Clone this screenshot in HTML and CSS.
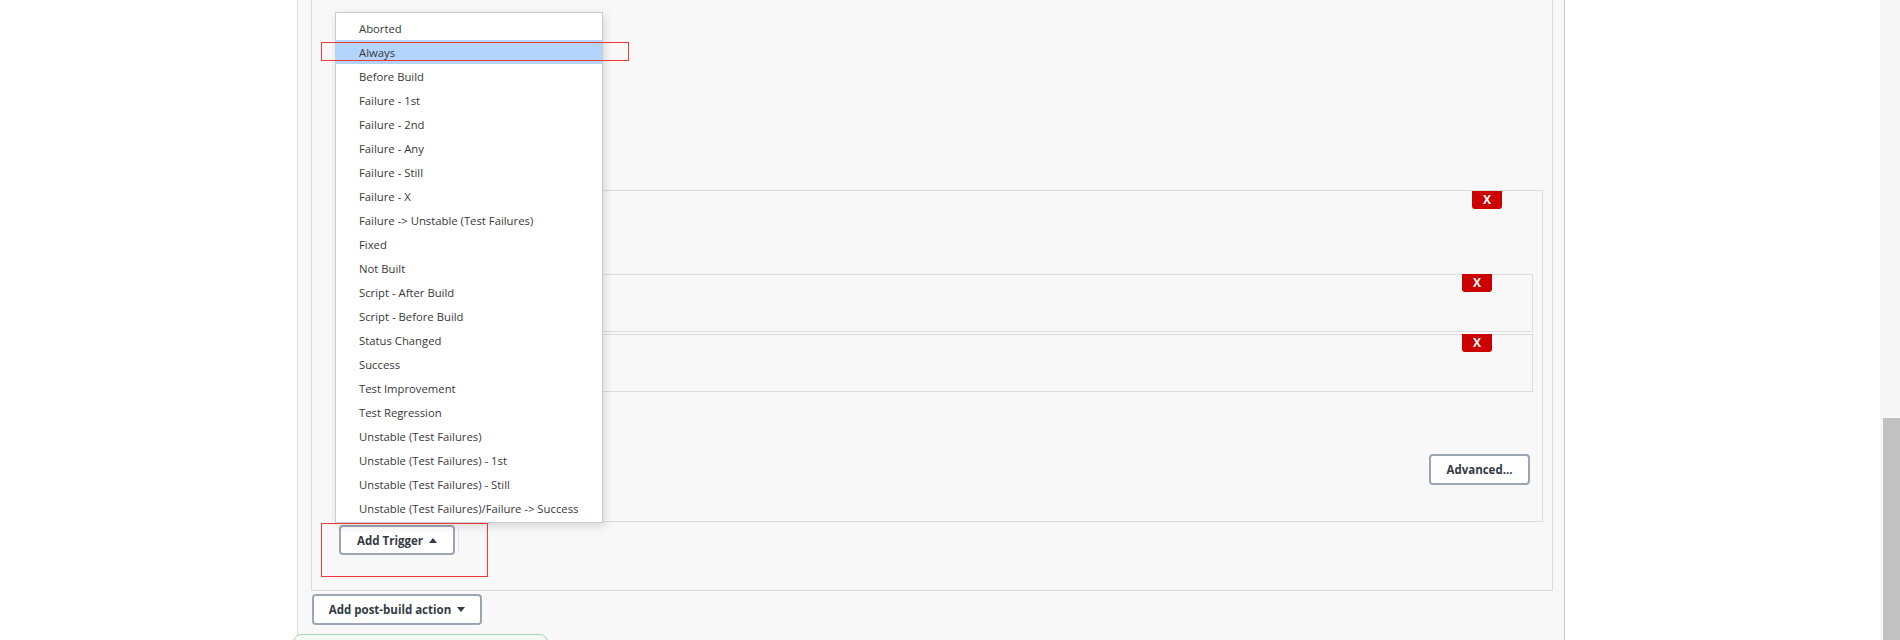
FILE: index.html
```html
<!DOCTYPE html>
<html>
<head>
<meta charset="utf-8">
<link rel="stylesheet" href="styles.css">
</head>
<body>
<div class="page">
  <div class="gutter"></div>
  <div class="column">
    <div class="section">
      <div class="trigger-box">
        <button class="del del-top">X</button>
        <div class="sub-box"><button class="del del-sub">X</button></div>
        <div class="sub-box sub-box-2"><button class="del del-sub">X</button></div>
        <div class="adv-row"><button class="btn btn-adv">Advanced...</button></div>
      </div>
      <div class="trigger-row">
        <button class="btn btn-trigger">Add Trigger <svg class="caret" width="8" height="5" viewBox="0 0 8 5"><polygon points="0,5 8,5 4,0" fill="#333a45"/></svg></button>
        <span class="split"></span>
      </div>
    </div>
    <button class="btn btn-post">Add post-build action <svg class="caret" width="8" height="5" viewBox="0 0 8 5"><polygon points="0,0 8,0 4,5" fill="#333a45"/></svg></button>
    <div class="notice"></div>
  </div>

  <ul class="menu">
    <li>Aborted</li>
    <li class="active">Always</li>
    <li>Before Build</li>
    <li>Failure - 1st</li>
    <li>Failure - 2nd</li>
    <li>Failure - Any</li>
    <li>Failure - Still</li>
    <li>Failure - X</li>
    <li>Failure -&gt; Unstable (Test Failures)</li>
    <li>Fixed</li>
    <li>Not Built</li>
    <li>Script - After Build</li>
    <li>Script - Before Build</li>
    <li>Status Changed</li>
    <li>Success</li>
    <li>Test Improvement</li>
    <li>Test Regression</li>
    <li>Unstable (Test Failures)</li>
    <li>Unstable (Test Failures) - 1st</li>
    <li>Unstable (Test Failures) - Still</li>
    <li>Unstable (Test Failures)/Failure -&gt; Success</li>
  </ul>

  <div class="mark mark-always"></div>
  <div class="mark mark-trigger"></div>

  <div class="scrollbar"><div class="thumb"></div></div>
</div>
</body>
</html>
```

FILE: styles.css
```css
html, body {
  margin: 0;
  padding: 0;
  background: #ffffff;
}
body {
  font-family: "Open Sans", "Liberation Sans", sans-serif;
  color: #333;
}
.page {
  position: relative;
  width: 1900px;
  height: 640px;
  overflow: hidden;
  display: flex;
  align-items: flex-start;
}
.gutter {
  width: 297px;
  flex: none;
}
.column {
  width: 1268px;
  height: 640px;
  flex: none;
  box-sizing: border-box;
  background: #f8f8f8;
  border-left: 1px solid #dcdcdc;
  border-right: 1px solid #c5ccd4;
  padding: 0 11px 0 13px;
  display: flex;
  flex-direction: column;
  align-items: flex-start;
}
.column > * {
  flex: none;
}
.section {
  align-self: stretch;
  border: 1px solid #dcdcdc;
  border-top: none;
  padding: 190px 9px 35px 27px;
  display: flex;
  flex-direction: column;
}
.trigger-box {
  position: relative;
  height: 332px;
  box-sizing: border-box;
  border: 1px solid #dcdcdc;
  padding: 83px 9px 0 20px;
  display: flex;
  flex-direction: column;
}
.sub-box {
  position: relative;
  height: 58px;
  flex: none;
  box-sizing: border-box;
  border: 1px solid #dcdcdc;
}
.sub-box-2 {
  margin-top: 2px;
}
.adv-row {
  display: flex;
  justify-content: flex-end;
  margin-top: 62px;
  margin-right: 3px;
}
.del {
  position: absolute;
  width: 30px;
  height: 18px;
  padding: 0;
  border: none;
  border-radius: 0 0 3px 3px;
  background: #cc0000;
  color: #fff;
  font-family: "Open Sans", "Liberation Sans", sans-serif;
  font-weight: 700;
  font-size: 12px;
  line-height: 18px;
  text-align: center;
}
.del-top {
  top: 0;
  right: 40px;
}
.del-sub {
  top: -1px;
  right: 40px;
}
.btn {
  box-sizing: border-box;
  background: #ffffff;
  border: 2px solid #9ba6b2;
  border-radius: 4px;
  font-family: "Open Sans", "Liberation Sans", sans-serif;
  font-weight: 700;
  font-size: 11.5px;
  color: #333a45;
  padding: 0;
  display: inline-flex;
  align-items: center;
  justify-content: center;
  gap: 6px;
}
.btn-adv {
  width: 101px;
  height: 31px;
}
.trigger-row {
  display: flex;
  align-items: center;
  margin-top: 3px;
}
.btn-trigger {
  width: 116px;
  height: 30px;
}
.split {
  width: 1px;
  height: 25px;
  margin-left: 3px;
  background: #e6e6e6;
}
.btn-post {
  width: 170px;
  height: 31px;
  margin-top: 3px;
  margin-left: 1px;
}
.caret {
  display: block;
}
.notice {
  width: 255px;
  height: 30px;
  margin-top: 9px;
  margin-left: -18px;
  box-sizing: border-box;
  border: 1px solid #a9d4b6;
  border-radius: 8px;
  background: #f3faf4;
}
.menu {
  position: absolute;
  left: 335px;
  top: 12px;
  width: 268px;
  box-sizing: border-box;
  margin: 0;
  padding: 3px 0 2px 0;
  list-style: none;
  background: #ffffff;
  border: 1px solid #c6ced6;
  box-shadow: 2px 3px 9px rgba(0, 0, 0, 0.14);
  font-size: 11.3px;
  color: #383838;
}
.menu li {
  height: 24px;
  box-sizing: border-box;
  padding-top: 1px;
  line-height: 23px;
  padding-left: 23px;
  white-space: nowrap;
}
.menu li.active {
  background: #b3d4fc;
}
.mark {
  position: absolute;
  border: 1px solid #f03a3a;
  box-sizing: border-box;
}
.mark-always {
  left: 321px;
  top: 42px;
  width: 308px;
  height: 19px;
}
.mark-trigger {
  left: 321px;
  top: 523px;
  width: 167px;
  height: 54px;
}
.scrollbar {
  position: absolute;
  right: 0;
  top: 0;
  width: 20px;
  height: 640px;
  background: #f7f7f7;
}
.thumb {
  margin: 418px 0 0 3px;
  height: 222px;
  background: #c1c1c1;
}
```
